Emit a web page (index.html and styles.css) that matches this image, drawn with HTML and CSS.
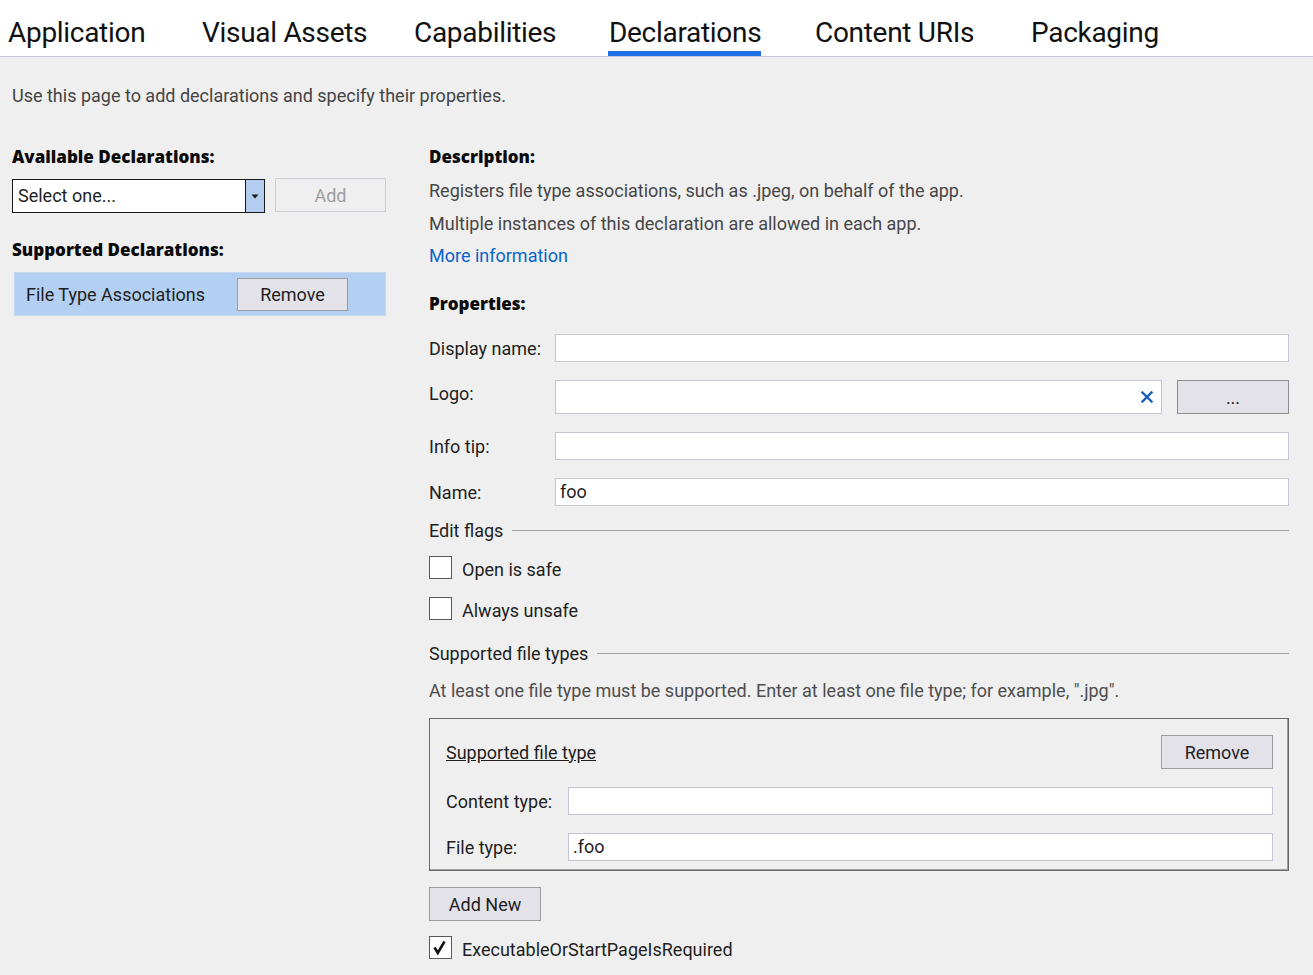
FILE: index.html
```html
<!DOCTYPE html>
<html lang="en">
<head>
<meta charset="utf-8">
<title>Declarations</title>
<link rel="stylesheet" href="styles.css">
</head>
<body>
<nav class="tabs">
  <span class="tab">Application</span>
  <span class="tab">Visual Assets</span>
  <span class="tab">Capabilities</span>
  <span class="tab active">Declarations</span>
  <span class="tab">Content URIs</span>
  <span class="tab">Packaging</span>
</nav>
<main class="page">
  <p class="intro">Use this page to add declarations and specify their properties.</p>
  <div class="columns">
    <section class="left">
      <h2 class="heading">Available Declarations:</h2>
      <div class="select-row">
        <div class="select">
          <span class="select-text">Select one...</span>
          <span class="select-arrow"><svg width="8" height="5" viewBox="0 0 8 5"><path d="M0.5 0.5H7.5L4 4.5Z" fill="#1a1a1a"/></svg></span>
        </div>
        <button class="btn btn-disabled add-btn">Add</button>
      </div>
      <h2 class="heading supported">Supported Declarations:</h2>
      <div class="decl-item">
        <span class="decl-name">File Type Associations</span>
        <button class="btn decl-remove">Remove</button>
      </div>
    </section>
    <section class="right">
      <h2 class="heading">Description:</h2>
      <p class="desc first">Registers file type associations, such as .jpeg, on behalf of the app.</p>
      <p class="desc second">Multiple instances of this declaration are allowed in each app.</p>
      <p class="desc link">More information</p>
      <h2 class="heading props">Properties:</h2>
      <div class="field">
        <label class="field-label">Display name:</label>
        <div class="input"></div>
      </div>
      <div class="field logo">
        <label class="field-label">Logo:</label>
        <div class="input clearable"><svg class="clear" width="12" height="12" viewBox="0 0 12 12"><path d="M1.5 1.5L10.5 10.5M10.5 1.5L1.5 10.5" stroke="#1c5fb8" stroke-width="2.4" stroke-linecap="square"/></svg></div>
        <button class="btn browse">...</button>
      </div>
      <div class="field">
        <label class="field-label">Info tip:</label>
        <div class="input"></div>
      </div>
      <div class="field">
        <label class="field-label">Name:</label>
        <div class="input">foo</div>
      </div>
      <div class="group-title flags"><span>Edit flags</span><span class="rule"></span></div>
      <div class="check-row first-check"><span class="checkbox"></span><span>Open is safe</span></div>
      <div class="check-row"><span class="checkbox"></span><span>Always unsafe</span></div>
      <div class="group-title types"><span>Supported file types</span><span class="rule"></span></div>
      <p class="desc hint">At least one file type must be supported. Enter at least one file type; for example, ".jpg".</p>
      <div class="type-box">
        <div class="type-head">
          <span class="type-title">Supported file type</span>
          <button class="btn type-remove">Remove</button>
        </div>
        <div class="field inner">
          <label class="field-label inner-label">Content type:</label>
          <div class="input"></div>
        </div>
        <div class="field inner">
          <label class="field-label inner-label">File type:</label>
          <div class="input">.foo</div>
        </div>
      </div>
      <button class="btn add-new">Add New</button>
      <div class="check-row last-check"><span class="checkbox checked"><svg width="23" height="23" viewBox="0 0 23 23"><path d="M5.5 11.5L8.8 17L15.5 5.5" fill="none" stroke="#111" stroke-width="2.6" stroke-linejoin="miter"/></svg></span><span>ExecutableOrStartPageIsRequired</span></div>
    </section>
  </div>
</main>
</body>
</html>
```
FILE: styles.css
```css
* { box-sizing: border-box; }
html, body { margin: 0; padding: 0; }
body {
  background: #efefef;
  font-family: Roboto, "Open Sans", "DejaVu Sans", sans-serif;
  font-size: 18px;
  color: #1e1e1e;
  width: 1313px;
  height: 975px;
  overflow: hidden;
}
p, h2 { margin: 0; }
button { font-family: inherit; }

.tabs {
  background: #ffffff;
  height: 57px;
  border-bottom: 1px solid #c6c4d6;
  display: flex;
  padding-left: 8px;
}
.tab {
  flex: none;
  font-size: 28px;
  letter-spacing: -0.3px;
  color: #111;
  height: 56px;
  line-height: 46px;
  padding-top: 10px;
  position: relative;
}
.tab:nth-child(1) { width: 194px; }
.tab:nth-child(2) { width: 212px; }
.tab:nth-child(3) { width: 195px; }
.tab:nth-child(4) { width: 206px; }
.tab:nth-child(5) { width: 216px; }
.tab.active::after {
  content: "";
  position: absolute;
  left: -1px;
  width: 153px;
  bottom: 0;
  height: 5px;
  background: #1f6fe5;
}

.page { padding: 27px 0 0 12px; }
.intro {
  line-height: 24px;
  color: #444;
}
.columns {
  display: flex;
  margin-top: 37px;
}
.heading {
  font-family: "Open Sans", Roboto, sans-serif;
  font-size: 17px;
  font-weight: 800;
  line-height: 24px;
  color: #0a0a0a;
}
.left { width: 374px; }
.right { width: 860px; margin-left: 43px; }

.select-row {
  display: flex;
  margin-top: 10px;
  gap: 10px;
}
.select {
  width: 253px;
  height: 34px;
  border: 1px solid #1a1a1a;
  background: #fff;
  display: flex;
  align-items: stretch;
}
.select-text {
  flex: 1;
  line-height: 32px;
  padding-left: 5px;
}
.select-arrow {
  width: 19px;
  background: #b2cdef;
  border-left: 1px solid #1a1a1a;
  display: flex;
  align-items: center;
  justify-content: center;
}
.btn {
  background: #e2e2e8;
  border: 1px solid #9c9c9c;
  font-size: 18px;
  color: #1e1e1e;
  padding: 0;
}
.btn-disabled {
  background: #efefef;
  border-color: #cdcdd6;
  color: #9e9e9e;
}
.add-btn { width: 111px; height: 34px; margin-top: -1px; }
.supported { margin-top: 25px; }
.decl-item {
  margin-top: 10px;
  margin-left: 2px;
  width: 372px;
  height: 44px;
  background: #b3d0f2;
  border: 1px solid #c2d8f3;
  display: flex;
  align-items: center;
  padding-left: 11px;
}
.decl-name { width: 211px; }
.decl-remove { width: 111px; height: 33px; }

.desc {
  line-height: 24px;
  color: #464646;
}
.desc.first { margin-top: 10px; }
.desc.second { margin-top: 9px; }
.desc.link { margin-top: 8px; color: #0a64c8; }
.props { margin-top: 24px; }

.field {
  display: flex;
  align-items: center;
  margin-top: 18px;
}
.field-label {
  width: 126px;
  flex: none;
}
.input {
  flex: 1;
  height: 28px;
  background: #fff;
  border: 1px solid #c5c3d6;
  line-height: 26px;
  padding-left: 4px;
}
.field.logo { align-items: flex-start; }
.field.logo .field-label { line-height: 28px; }
.field.logo .input { height: 34px; position: relative; }
.clear { position: absolute; right: 8px; top: 10px; }
.browse { width: 112px; height: 34px; margin-left: 15px; border-color: #8e8e8e; }

.group-title {
  display: flex;
  align-items: center;
  line-height: 24px;
}
.group-title .rule {
  flex: 1;
  height: 1px;
  background: #a0a0a0;
  margin-left: 9px;
  margin-top: -2px;
}
.flags { margin-top: 13px; }
.types { margin-top: 22px; }

.check-row {
  display: flex;
  align-items: center;
  height: 23px;
  margin-top: 18px;
}
.check-row.first-check { margin-top: 13px; }
.checkbox {
  width: 23px;
  height: 23px;
  background: #fff;
  border: 1px solid #5a5a5a;
  margin-right: 10px;
  flex: none;
  position: relative;
}
.checkbox svg { position: absolute; left: -1px; top: -1px; }
.check-row span:last-child { padding-top: 4px; }

.hint { margin-top: 13px; color: #4d4d4d; }
.type-box {
  margin-top: 15px;
  height: 153px;
  border: 1px solid #6a6a6a;
  box-shadow: inset -1px -1px 0 #a0a0a0;
  padding: 16px 15px 0 16px;
}
.type-head {
  display: flex;
  align-items: center;
  justify-content: space-between;
  height: 34px;
}
.type-title { text-decoration: underline; }
.type-remove { width: 112px; height: 34px; }
.field.inner { margin-top: 18px; }
.inner-label { width: 122px; }
.add-new { margin-top: 16px; width: 112px; height: 34px; }
.last-check { margin-top: 15px; }
```
